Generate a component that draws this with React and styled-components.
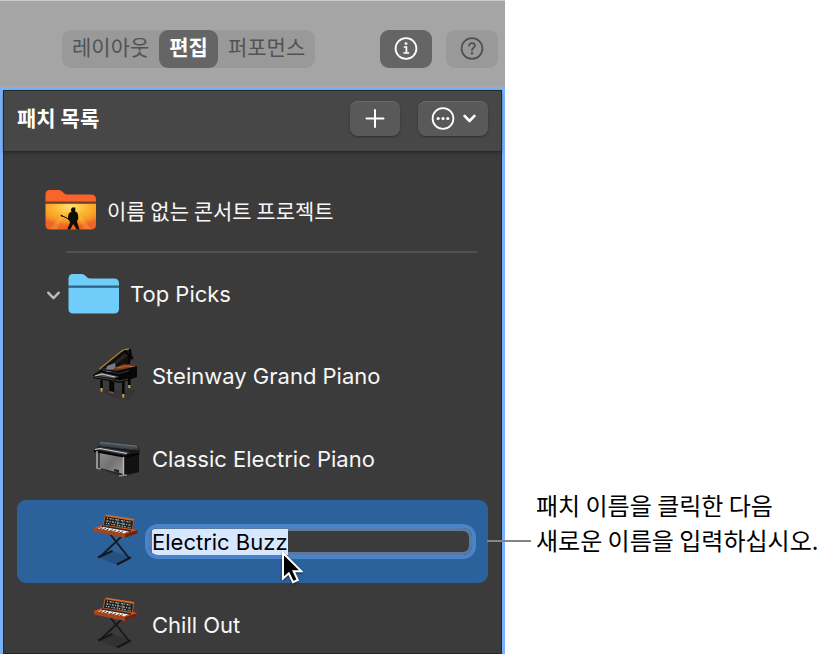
import React, { useEffect, useRef } from "react";
import styled, { createGlobalStyle, css } from "styled-components";

const GlobalStyle = createGlobalStyle`
  *, *::before, *::after { box-sizing: border-box; }
  body {
    margin: 0;
    background: #fff;
    font-family: Inter, "Noto Sans CJK KR", sans-serif;
  }
  button, input { font-family: inherit; }
`;

const Page = styled.main`
  display: grid;
  grid-template-columns: minmax(0, 505fr) minmax(0, 317fr);
  height: 100vh;
  overflow: hidden;
`;

const AppWindow = styled.section`
  display: flex;
  flex-direction: column;
  min-height: 0;
`;

const Toolbar = styled.header`
  display: flex;
  align-items: center;
  flex: none;
  height: 87px;
  padding: 10px 7px 0 62px;
  border-top: 1px solid #cbcbcb;
  background: #a5a5a5;
`;

const Segments = styled.div`
  display: flex;
  height: 38px;
  margin-right: auto;
  border-radius: 9px;
  background: #999;
`;

const Segment = styled.button`
  padding: 0 10px 3px;
  border: 0;
  border-radius: 9px;
  background: ${(p) => (p.$active ? "#656565" : "transparent")};
  color: ${(p) => (p.$active ? "#fff" : "#535353")};
  font-size: 21px;
  font-weight: ${(p) => (p.$active ? 700 : 400)};
  line-height: 24px;
  white-space: nowrap;
`;

const ToolButton = styled.button`
  display: grid;
  place-items: center;
  width: 52px;
  height: 38px;
  margin-left: 14px;
  padding: 0;
  border: 0;
  border-radius: 9px;
  background: ${(p) => (p.$active ? "#656565" : "#999")};
  color: ${(p) => (p.$active ? "#fff" : "#505050")};
`;

const Panel = styled.section`
  display: flex;
  flex: 1;
  flex-direction: column;
  min-height: 0;
  border: 3px solid #79b2fb;
  border-bottom: 0;
  background: #3b3b3b;
  box-shadow: inset 0 0 0 1px #262626;
  padding: 1px 1px 0;
`;

const PanelHeader = styled.div`
  display: flex;
  align-items: center;
  flex: none;
  height: 61px;
  padding: 0 13px 5px 13px;
  border-bottom: 1px solid #292929;
  background: #474747;
  box-shadow: 0 1px 3px #2b2b2b;
`;

const Title = styled.h1`
  margin: 0 auto 0 0;
  color: #fff;
  font-size: 21px;
  font-weight: 700;
  line-height: 30px;
`;

const HeaderButton = styled.button`
  display: flex;
  align-items: center;
  justify-content: center;
  gap: 8px;
  width: ${(p) => (p.$wide ? "70px" : "50px")};
  height: 35px;
  margin-left: 18px;
  padding: 0;
  border: 0;
  border-radius: 8px;
  background: #595959;
  box-shadow: inset 0 1px 0 #696969, 0 1px 2px #303030;
  color: #fff;
`;

const List = styled.ul`
  flex: 1;
  min-height: 0;
  margin: 0;
  padding: 16px 13px 0;
  overflow-y: auto;
  scrollbar-width: none;
  list-style: none;
`;

const indents = { root: "28px", group: "29px", patch: "75px" };

const Row = styled.li`
  display: flex;
  align-items: center;
  height: 83px;
  padding: 0 16px 0 ${(p) => indents[p.$level]};
  border-radius: 9px;
  ${(p) => p.$level === "group" && css`padding-top: 2px;`}
  ${(p) => p.$selected && css`background: #2c629c;`}
`;

const Divider = styled.li`
  height: 2px;
  margin: 0 11px -2px 49px;
  background: #515151;
`;

const Name = styled.span`
  padding-left: ${(p) => (p.$folder ? "11px" : "12px")};
  color: #f7f7f7;
  font-family: ${(p) => (p.$korean ? '"Noto Sans CJK KR", sans-serif' : "inherit")};
  font-size: ${(p) => (p.$korean ? "21px" : "22px")};
  line-height: 28px;
  white-space: nowrap;
`;

const Disclosure = styled.button`
  display: flex;
  margin-right: 7px;
  padding: 3px 0 0;
  border: 0;
  background: none;
  color: #bdbdbd;
`;

const Field = styled.div`
  position: relative;
  display: flex;
  flex: 1;
  min-width: 0;
  margin-left: 9px;
`;

const NameInput = styled.input`
  width: 100%;
  height: 27px;
  padding: 1px 3px 0;
  border: 0;
  border-radius: 9px;
  outline: 0;
  background: #3b3b3b;
  box-shadow: 0 0 0 4px #4a84c8, inset 0 0 0 3px #5a7aa3;
  color: #fff;
  font-size: 22px;
  line-height: 27px;
  &::selection { background: #d7e7ff; color: #000; }
`;

const Pointer = styled.svg`
  position: absolute;
  top: 23px;
  left: 132px;
  filter: drop-shadow(0 1px 1px #0008);
`;

const Callout = styled.aside`
  position: relative;
  padding: 487px 0 0 31px;
`;

const CalloutText = styled.p`
  margin: 0;
  color: #000;
  font-family: "Noto Sans CJK KR", sans-serif;
  font-size: 24px;
  font-weight: 400;
  line-height: 35px;
  white-space: nowrap;
`;

const Leader = styled.div`
  position: absolute;
  top: 540px;
  left: -18px;
  width: 44px;
  height: 2px;
  background: #858585;
`;

const Art = styled.svg`
  display: block;
  flex: none;
`;

const InfoIcon = () => (
  <Art width="24" height="24" viewBox="0 0 24 24" fill="none" stroke="currentColor" strokeWidth="1.8" aria-hidden="true">
    <circle cx="12" cy="11.5" r="10.4" />
    <path d="M9.8 10h2.6v5.8M9.4 16h5.8" strokeWidth="1.7" />
    <circle cx="12" cy="6.6" r="1.4" fill="currentColor" stroke="none" />
  </Art>
);

const HelpIcon = () => (
  <Art width="24" height="24" viewBox="0 0 24 24" fill="none" stroke="currentColor" strokeWidth="1.7" aria-hidden="true">
    <circle cx="12" cy="11.5" r="10.4" />
    <path d="M9 8.8c.1-1.7 1.3-2.7 3-2.7 1.8 0 3 1 3 2.5 0 2.2-3 2.2-3 4.7" strokeLinecap="round" />
    <circle cx="12" cy="16.3" r="1.2" fill="currentColor" stroke="none" />
  </Art>
);

const PlusIcon = () => (
  <Art width="20" height="20" viewBox="0 0 20 20" stroke="currentColor" strokeWidth="2" strokeLinecap="round" aria-hidden="true">
    <path d="M10 1v17M1.5 9.5h17" />
  </Art>
);

const MoreIcon = () => (
  <Art width="24" height="24" viewBox="0 0 24 24" fill="none" stroke="currentColor" strokeWidth="1.8" aria-hidden="true">
    <circle cx="12" cy="11.5" r="10.4" />
    <g fill="currentColor" stroke="none">
      <circle cx="7.2" cy="11.5" r="1.6" />
      <circle cx="12" cy="11.5" r="1.6" />
      <circle cx="16.8" cy="11.5" r="1.6" />
    </g>
  </Art>
);

const Chevron = ({ width, weight }) => (
  <Art width={width} height="9" viewBox="0 0 14 9" fill="none" stroke="currentColor" strokeWidth={weight} strokeLinecap="round" strokeLinejoin="round" aria-hidden="true">
    <path d="M1.7 1.7 7 7.2l5.3-5.5" />
  </Art>
);

const FOLDER_TOP = "M.5 11.8V5Q.5 0 5 0h8.2c2.6 0 3.6 1 5 2.6 1.1 1.3 2 1.9 4 1.9H46q5 0 5 5v2.3z";
const FOLDER_BODY = "M.5 13.6H51v20.9q0 5-5 5H5q-4.5 0-4.5-5z";

const FolderIcon = () => (
  <Art width="51" height="40" viewBox="0 0 51 40" aria-hidden="true">
    <path d={FOLDER_TOP} fill="#70cdf9" />
    <path d={FOLDER_BODY} fill="#70cdf9" />
    <path d="M.5 12.7H51" stroke="#2d6384" strokeWidth="1.8" />
  </Art>
);

const ConcertIcon = () => (
  <Art width="51" height="40" viewBox="0 0 51 40" aria-hidden="true">
    <defs>
      <radialGradient id="stage" cx="50%" cy="12%" r="75%">
        <stop offset="0" stopColor="#ffe37a" />
        <stop offset=".4" stopColor="#fdbb32" />
        <stop offset=".75" stopColor="#f79a26" />
        <stop offset="1" stopColor="#ef6424" />
      </radialGradient>
    </defs>
    <path d={FOLDER_TOP} fill="#fa642b" />
    <path d={FOLDER_BODY} fill="url(#stage)" />
    <path d="M25 13.6 5 39h7zM26 13.6 39 39h7z" fill="#ffd956" opacity=".22" />
    <path d="M.5 12.7H51" stroke="#70402b" strokeWidth="1.8" />
    <path d="M27 17.6h3.4l-.2 3.8 2 1 1 3.2v3.6l-.9 1-.1 2.3 2.4 7h-2.8L28.2 34l-3 5.5h-3l2.8-6.8-.4-1.7-1.6-1.4v-3l.9-3.4 2.5-1.4-.5-2.4z" fill="#110d07" />
    <path d="m16 25.5 1.7.6 6.3 3 3 1.4" fill="none" stroke="#110d07" strokeWidth="1" />
    <path d="m16 25 1.5 1.5" stroke="#110d07" strokeWidth="1.5" />
  </Art>
);

const GrandPianoIcon = () => (
  <Art width="48" height="55" viewBox="0 0 48 55" aria-hidden="true">
    <path d="m8 42 12 7 16 3 8-10z" fill="#303030" opacity=".6" />
    <path d="M7.5 21 29 3.5Q33 .2 39 1l1.5 8-5 8.5z" fill="#111" />
    <path d="M7.5 21 29 3.5q3-2.5 8-2.6" fill="none" stroke="#a97b38" strokeWidth="1.5" />
    <path d="M16 21 38 3.5" stroke="#28231b" strokeWidth="3" />
    <path d="M32 2.5 41 11M38 1l-1 15" stroke="#050505" strokeWidth="2" />
    <path d="m15 18 8-3 1 6-10 1z" fill="#747c86" />
    <path d="m22 20 10-4 12 2-6 4-16-1z" fill="#7e3b1b" />
    <path d="m25 20 10-2 8 1" stroke="#b86b36" fill="none" />
    <path d="m1 27 9-6 15 2 20-5v11l-8 3-9 3-27-5z" fill="#070707" />
    <path d="m2 27.5 7-3 18 4-5 2z" fill="#4f5154" />
    <path d="m3 28 7-2 13 3" fill="none" stroke="#c9c9c5" strokeWidth="1.2" />
    <path d="m10 22 17 3.5 10-3" fill="none" stroke="#343638" strokeWidth="1.2" />
    <path d="M14 23.5h5" stroke="#997642" strokeWidth=".8" />
    <path d="M1 28.5 28 33l8-2" fill="none" stroke="#414141" />
    <path d="M9.5 32v11M31.3 33v16M37.3 30v9M18.5 33v12M21 34v12" stroke="#050505" strokeWidth="2.4" />
    <path d="m17 43 5 1v2l-5-1z" fill="#74542d" />
    <path d="M9.5 40v3.4M31.3 46v3.6M37.3 37v3" stroke="#d2a64e" strokeWidth="2.1" />
  </Art>
);

const ElectricPianoIcon = () => (
  <Art width="48" height="55" viewBox="0 0 48 55" aria-hidden="true">
    <defs>
      <linearGradient id="cabinet" x2="1" y2="1">
        <stop stopColor="#8f8f8f" />
        <stop offset=".5" stopColor="#727272" />
        <stop offset="1" stopColor="#9a9a9a" />
      </linearGradient>
    </defs>
    <path d="m5 37 27 9 15-5-15-5z" fill="#292929" />
    <path d="m8 20 24 6v17L8 37z" fill="url(#cabinet)" />
    <path d="m32 26 15-4v19l-15 3z" fill="#111" />
    <path d="M7 12q1-2 4-1.7L43 14q4 .6 4.5 4v6L33 26 4 20z" fill="#18191b" />
    <path d="M7 12q1-2 4-1.7L43 14q2 .2 3 1.6l.6 3.4L6 15z" fill="#454b51" />
    <path d="m8 11.5 33 3.4 4 .4" fill="none" stroke="#6a7178" strokeWidth="1" />
    <path d="m7 14.5 32 4 7-1" fill="none" stroke="#30363d" strokeWidth="1.2" />
    <path d="m2 18 6-2 30 5-5 3z" fill="#393c40" />
    <path d="m3 18.5 5-1 27 5" fill="none" stroke="#d1d5d6" strokeWidth="1.2" />
    <path d="m2 20 31 5.7 14-3" fill="none" stroke="#050505" strokeWidth="2" />
    <path d="M5 20v17.5M31.5 26v18.5" stroke="#b8b8b8" strokeWidth="1.4" />
    <path d="m4 37 5 1M27 45l8-1" stroke="#8b8b8b" strokeWidth="1.3" />
    <path d="m22 38 5 1v3l-5-2z" fill="#222" />
  </Art>
);

const SynthIcon = () => (
  <Art width="48" height="55" viewBox="0 0 48 55" aria-hidden="true">
    <path d="m7 44 14-7 18 6-14 8z" fill="#112" opacity=".22" />
    <path d="m18 20 19 24M30 22 9 42" stroke="#17191a" strokeWidth="1.8" />
    <path d="m6 43.5 14.5-6.7M25 50.5l14-7.2" stroke="#151616" strokeWidth="2" />
    <path d="M13.5 1 42 5.5l-1.5 12L11 11.5z" fill="#1b2022" />
    <path d="M13.5 1.4 42 6" stroke="#d76c29" strokeWidth="1.8" />
    <path d="m13 2-1.7 9M41.7 6l-1.3 10" stroke="#ae5622" strokeWidth="1.2" />
    <g fill="none" stroke="#b8bab4" strokeWidth="1.2">
      <path d="m15 4.2 24 4" strokeDasharray="1 1.7 2 1" />
      <path d="m14.4 6.8 24.7 4.5" strokeDasharray="2 1.2 1 1.4" />
      <path d="m14 9.3 24.6 4.5" strokeDasharray="1 1 1.5 2" />
    </g>
    <path d="m26 5-1 8M31 6l-1 8" stroke="#8a9490" strokeWidth=".7" />
    <path d="m2 14 9-3.3L45.5 16v3.2L33 24 2 17.5z" fill="#a8421c" />
    <path d="m2 14 9-3.3L45.5 16 33 20z" fill="#c9562a" />
    <path d="M33 20v4l12.5-4.8V16z" fill="#662516" />
    <path d="m6 14.5 6-2 25 4.5-5 2.2z" fill="#f0eee8" />
    <path d="m8 15 3-1.4M11 15.6l3-1.4M14 16.2l3-1.4M18 17l3-1.4M21 17.6l3-1.4M25 18.3l3-1.4M28 18.8l3-1.3" stroke="#232321" strokeWidth=".8" />
    <path d="m10 12 29 5" stroke="#302623" strokeWidth="1.3" />
  </Art>
);

const patches = [
  { name: "Steinway Grand Piano", Icon: GrandPianoIcon },
  { name: "Classic Electric Piano", Icon: ElectricPianoIcon },
  { name: "Electric Buzz", Icon: SynthIcon, editing: true },
  { name: "Chill Out", Icon: SynthIcon },
];

function NameEditor({ value }) {
  const ref = useRef(null);
  useEffect(() => {
    ref.current.focus();
    ref.current.select();
  }, []);
  return (
    <Field>
      <NameInput ref={ref} aria-label="패치 이름" defaultValue={value} spellCheck={false} />
      <Pointer width="22" height="33" viewBox="0 0 22 33" aria-hidden="true">
        <path d="M2 2v25.5l5.8-5.2 4.2 8.9 4.8-2.2-4.2-8.7h7.8z" fill="#000" stroke="#fff" strokeWidth="2" />
      </Pointer>
    </Field>
  );
}

export default function App() {
  return (
    <>
      <GlobalStyle />
      <Page>
        <AppWindow>
          <Toolbar>
            <Segments role="group">
              <Segment>레이아웃</Segment>
              <Segment $active aria-pressed="true">편집</Segment>
              <Segment>퍼포먼스</Segment>
            </Segments>
            <ToolButton $active aria-label="정보"><InfoIcon /></ToolButton>
            <ToolButton aria-label="도움말"><HelpIcon /></ToolButton>
          </Toolbar>
          <Panel>
            <PanelHeader>
              <Title>패치 목록</Title>
              <HeaderButton aria-label="추가"><PlusIcon /></HeaderButton>
              <HeaderButton $wide aria-label="동작"><MoreIcon /><Chevron width="13" weight="2.8" /></HeaderButton>
            </PanelHeader>
            <List>
              <Row $level="root">
                <ConcertIcon />
                <Name $folder $korean>이름 없는 콘서트 프로젝트</Name>
              </Row>
              <Divider role="separator" />
              <Row $level="group">
                <Disclosure aria-label="Top Picks" aria-expanded="true"><Chevron width="15" weight="2.4" /></Disclosure>
                <FolderIcon />
                <Name $folder>Top Picks</Name>
              </Row>
              {patches.map(({ name, Icon, editing }) => (
                <Row key={name} $level="patch" $selected={editing}>
                  <Icon />
                  {editing ? <NameEditor value={name} /> : <Name>{name}</Name>}
                </Row>
              ))}
            </List>
          </Panel>
        </AppWindow>
        <Callout>
          <Leader />
          <CalloutText>패치 이름을 클릭한 다음<br />새로운 이름을 입력하십시오.</CalloutText>
        </Callout>
      </Page>
    </>
  );
}
